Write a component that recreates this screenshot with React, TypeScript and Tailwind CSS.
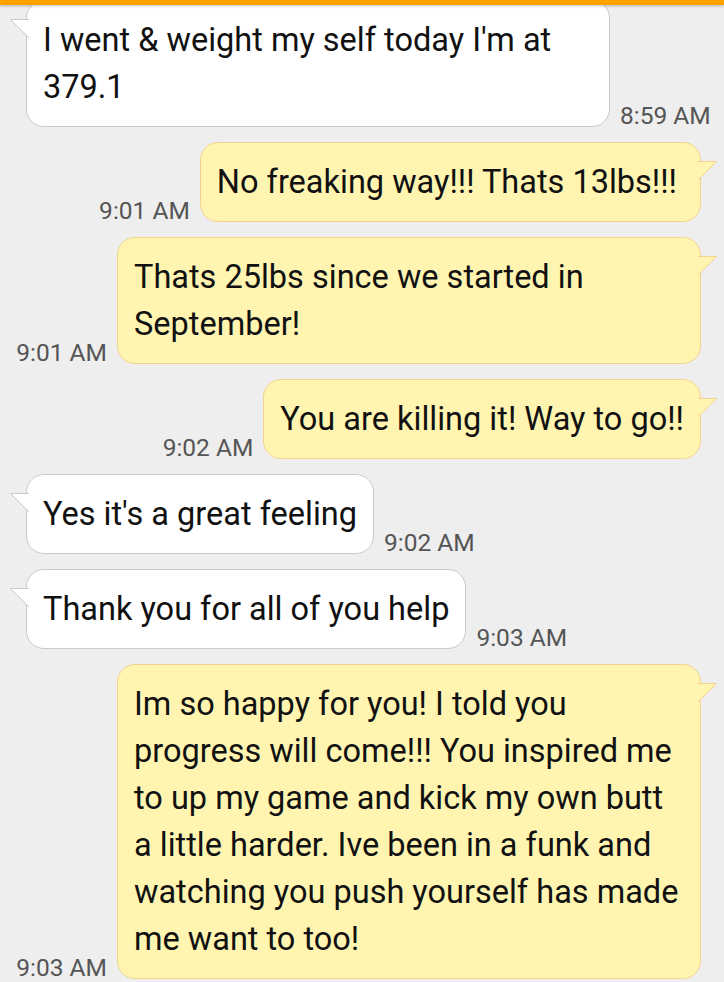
import React from "react";

type Msg = { out: boolean; text: string; time: string; wide?: boolean };

const messages: Msg[] = [
  { out: false, text: "I went & weight my self today I'm at 379.1", time: "8:59 AM" },
  { out: true, text: "No freaking way!!! Thats 13lbs!!!", time: "9:01 AM", wide: true },
  { out: true, text: "Thats 25lbs since we started in September!", time: "9:01 AM" },
  { out: true, text: "You are killing it! Way to go!!", time: "9:02 AM" },
  { out: false, text: "Yes it's a great feeling", time: "9:02 AM" },
  { out: false, text: "Thank you for all of you help", time: "9:03 AM" },
  {
    out: true,
    text: "Im so happy for you! I told you progress will come!!! You inspired me to up my game and kick my own butt a little harder. Ive been in a funk and watching you push yourself has made me want to too!",
    time: "9:03 AM",
  },
];

/* little speech-bubble tail, drawn over the bubble's border */
function Tail({ out }: { out: boolean }) {
  const fill = out ? "#fff5b1" : "#ffffff";
  const stroke = out ? "#f2d28c" : "#c9c9c9";
  if (out) {
    return (
      <svg
        className="absolute -right-[17px] top-[18px]"
        width="19"
        height="20"
        viewBox="0 0 19 20"
      >
        <path d="M0 0.5 H18.5 L0 19 Z" fill={fill} />
        <path d="M0 0.5 H18.5 L0 19" fill="none" stroke={stroke} strokeWidth="1" />
      </svg>
    );
  }
  return (
    <svg
      className="absolute -left-[17px] top-[18px]"
      width="19"
      height="20"
      viewBox="0 0 19 20"
    >
      <path d="M19 0.5 H0.5 L19 19 Z" fill={fill} />
      <path d="M19 0.5 H0.5 L19 19" fill="none" stroke={stroke} strokeWidth="1" />
    </svg>
  );
}

function Time({ children }: { children: string }) {
  return (
    <div className="shrink-0 whitespace-nowrap text-[24.5px] leading-[22px] text-[#555555]">
      {children}
    </div>
  );
}

function Row({ m }: { m: Msg }) {
  const bubble = (
    <div
      className={
        m.out
          ? "relative max-w-[584px] rounded-[18px] border border-[#f2d28c] bg-[#fff5b1] pb-[15px] pl-[16px] pt-[16px] text-[32.5px] leading-[47px] text-[#111111]"
          : "relative max-w-[584px] rounded-[18px] border border-[#c9c9c9] bg-white pb-[15px] pl-[16px] pr-[16px] pt-[16px] text-[32.5px] leading-[47px] text-[#111111]"
      }
    >
      <Tail out={m.out} />
      <div className={m.wide ? "pr-[23px]" : m.out ? "pr-[16px]" : ""}>{m.text}</div>
    </div>
  );

  if (m.out) {
    return (
      <div className="flex items-end justify-end gap-[10px] pr-[23px]">
        <Time>{m.time}</Time>
        {bubble}
      </div>
    );
  }
  return (
    <div className="flex items-end gap-[10px] pl-[26px]">
      {bubble}
      <Time>{m.time}</Time>
    </div>
  );
}

export default function App() {
  return (
    <div
      className="relative h-[982px] w-[724px] overflow-hidden bg-[#eeeeee]"
      style={{ fontFamily: "Roboto, 'Noto Sans', sans-serif" }}
    >
      <div className="absolute inset-x-0 top-0 z-10 h-[5px] bg-[#ffa200] shadow-[0_1px_3px_rgba(0,0,0,0.25)]" />
      <div className="flex flex-col gap-[15px]">
        {messages.map((m, i) => (
          <Row key={i} m={m} />
        ))}
      </div>
    </div>
  );
}
